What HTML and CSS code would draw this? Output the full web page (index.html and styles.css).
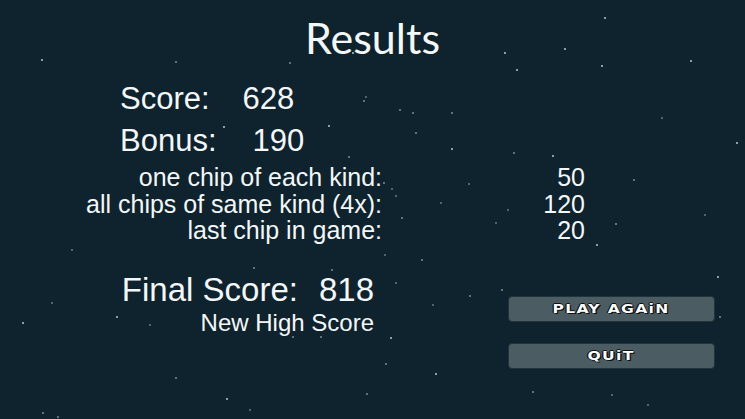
FILE: index.html
```html
<!DOCTYPE html>
<html>
<head>
<meta charset="utf-8">
<link rel="stylesheet" href="styles.css">
</head>
<body>
<div class="screen">
  <svg class="stars" width="745" height="419" viewBox="0 0 745 419">
    <g fill="#c9d8de">
      <circle cx="42" cy="60" r="0.9"/><circle cx="176" cy="62" r="0.8"/><circle cx="224" cy="127" r="0.9"/>
      <circle cx="290" cy="63" r="0.8"/><circle cx="353" cy="53" r="0.9"/><circle cx="364" cy="101" r="0.8"/>
      <circle cx="366" cy="97" r="0.7"/><circle cx="400" cy="110" r="0.8"/><circle cx="413" cy="113" r="0.8"/>
      <circle cx="416" cy="133" r="0.8"/><circle cx="329" cy="126" r="0.9"/><circle cx="349" cy="157" r="0.8"/>
      <circle cx="605" cy="18" r="0.9"/><circle cx="505" cy="53" r="0.9"/><circle cx="565" cy="49" r="0.9"/>
      <circle cx="517" cy="70" r="0.9"/><circle cx="602" cy="66" r="0.9"/><circle cx="691" cy="61" r="0.9"/>
      <circle cx="452" cy="113" r="0.8"/><circle cx="662" cy="118" r="0.7"/><circle cx="737" cy="143" r="0.9"/>
      <circle cx="452" cy="149" r="0.9"/><circle cx="514" cy="153" r="0.8"/><circle cx="553" cy="156" r="0.9"/>
      <circle cx="384" cy="183" r="0.8"/><circle cx="392" cy="189" r="0.7"/><circle cx="396" cy="196" r="0.7"/>
      <circle cx="402" cy="218" r="0.8"/><circle cx="441" cy="203" r="0.7"/><circle cx="469" cy="184" r="0.7"/>
      <circle cx="496" cy="223" r="0.7"/><circle cx="508" cy="210" r="0.7"/><circle cx="597" cy="245" r="0.9"/>
      <circle cx="616" cy="224" r="0.8"/><circle cx="634" cy="180" r="0.8"/><circle cx="385" cy="255" r="0.7"/>
      <circle cx="422" cy="260" r="0.8"/><circle cx="254" cy="268" r="0.8"/><circle cx="332" cy="270" r="0.8"/>
      <circle cx="396" cy="283" r="0.7"/><circle cx="502" cy="290" r="0.8"/><circle cx="718" cy="277" r="0.9"/>
      <circle cx="720" cy="317" r="0.8"/><circle cx="23" cy="323" r="0.9"/><circle cx="117" cy="317" r="0.9"/>
      <circle cx="176" cy="378" r="0.8"/><circle cx="227" cy="399" r="0.9"/><circle cx="43" cy="413" r="0.8"/>
      <circle cx="58" cy="417" r="0.8"/><circle cx="293" cy="337" r="0.8"/><circle cx="321" cy="337" r="0.8"/>
      <circle cx="391" cy="338" r="0.9"/><circle cx="386" cy="364" r="0.8"/><circle cx="436" cy="374" r="0.9"/>
      <circle cx="367" cy="394" r="0.8"/><circle cx="470" cy="296" r="0.8"/><circle cx="433" cy="305" r="0.7"/>
      <circle cx="530" cy="307" r="0.9"/><circle cx="589" cy="316" r="0.9"/><circle cx="565" cy="368" r="0.8"/>
      <circle cx="696" cy="368" r="0.9"/><circle cx="533" cy="392" r="0.8"/><circle cx="612" cy="395" r="0.7"/>
      <circle cx="648" cy="405" r="0.7"/><circle cx="72" cy="250" r="0.7"/><circle cx="52" cy="303" r="0.7"/>
      <circle cx="150" cy="325" r="0.7"/><circle cx="250" cy="410" r="0.7"/><circle cx="705" cy="215" r="0.7"/>
    </g>
  </svg>

  <div class="content">
    <h1 class="title">Results</h1>

    <div class="scores">
      <div class="score-line"><span class="label">Score:</span><span class="value value-score">628</span></div>
      <div class="score-line"><span class="label">Bonus:</span><span class="value value-bonus">190</span></div>
    </div>

    <div class="details">
      <span class="d-label">one chip of each kind:</span><span class="d-value">50</span>
      <span class="d-label">all chips of same kind (4x):</span><span class="d-value">120</span>
      <span class="d-label">last chip in game:</span><span class="d-value">20</span>
    </div>

    <div class="bottom">
      <div class="final">
        <div class="score-line final-line"><span class="label">Final Score:</span><span class="value value-final">818</span></div>
        <div class="highscore">New High Score</div>
      </div>
      <div class="buttons">
        <button class="btn btn-play"><span class="btn-text">PLAY AGAiN</span></button>
        <button class="btn btn-quit"><span class="btn-text">QUiT</span></button>
      </div>
    </div>
  </div>
</div>
</body>
</html>
```

FILE: styles.css
```css
html, body {
  margin: 0;
  padding: 0;
  background: #0e232d;
}

.screen {
  position: relative;
  width: 745px;
  height: 419px;
  overflow: hidden;
  background: #0e232d;
  font-family: "Liberation Sans", Arial, sans-serif;
  color: #f4f7f8;
}

.stars {
  position: absolute;
  left: 0;
  top: 0;
}

.content {
  position: relative;
}

.title {
  margin: 13px 0 0 0;
  height: 50px;
  line-height: 50px;
  font-family: Lato, "Open Sans", sans-serif;
  font-size: 43px;
  font-weight: 400;
  text-align: center;
}

.scores {
  margin-top: 15px;
  padding-left: 120px;
}

.score-line {
  display: flex;
  height: 42px;
  line-height: 42px;
  font-size: 31px;
}

.value-score { margin-left: 33px; }
.value-bonus { margin-left: 36px; }
.value-final { margin-left: 21px; }

.details {
  margin-top: 2px;
  display: grid;
  grid-template-columns: 382px 203px;
  font-size: 25px;
  line-height: 26.5px;
}

.d-label {
  text-align: right;
}

.d-value {
  text-align: right;
}

.bottom {
  margin-top: 26px;
  display: flex;
}

.final {
  width: 374px;
  display: flex;
  flex-direction: column;
  align-items: flex-end;
}

.final-line {
  height: 40px;
  line-height: 40px;
  font-size: 33px;
}

.highscore {
  font-size: 24px;
  height: 26px;
  line-height: 26px;
}

.buttons {
  margin-left: 134px;
  margin-top: 26px;
  display: flex;
  flex-direction: column;
  gap: 21px;
}

.btn {
  width: 207px;
  height: 26px;
  padding: 0;
  background: #4b5c62;
  border: 1px solid #22343b;
  border-radius: 4px;
  display: flex;
  align-items: center;
  justify-content: center;
  font-family: "DejaVu Sans", sans-serif;
  font-weight: bold;
  font-size: 12px;
  color: #ffffff;
}

.btn-text {
  display: inline-block;
  letter-spacing: 1px;
  transform: scaleX(1.3);
  text-shadow: 0 0 1px #000, 1px 1px 0 #101418, -1px 0 0 #101418, 0 -1px 0 #101418;
}
```
